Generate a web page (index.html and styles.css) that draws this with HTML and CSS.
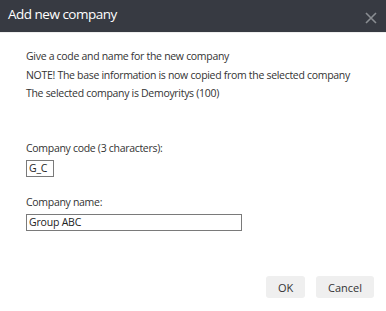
FILE: index.html
```html
<!DOCTYPE html>
<html lang="en">
<head>
    <meta charset="UTF-8">
    <title>Add new company</title>
    <link rel="stylesheet" href="styles.css">
</head>
<body>
    <div class="dialog">
        <div class="dialog-header">
            <span class="dialog-title">Add new company</span>
            <button type="button" class="btn-close" aria-label="Close">
                <svg width="12" height="12" viewBox="0 0 12 12">
                    <path d="M1 1 L11 11 M11 1 L1 11" stroke="#8a8d92" stroke-width="1.6" fill="none"/>
                </svg>
            </button>
        </div>
        <div class="dialog-body">
            <div class="info">
                <p>Give a code and name for the new company</p>
                <p>NOTE! The base information is now copied from the selected company</p>
                <p>The selected company is Demoyritys (100)</p>
            </div>
            <div class="form-group">
                <label for="code">Company code (3 characters):</label>
                <input type="text" id="code" class="input-code" value="G_C" maxlength="3">
            </div>
            <div class="form-group">
                <label for="name">Company name:</label>
                <input type="text" id="name" class="input-name" value="Group ABC">
            </div>
        </div>
        <div class="dialog-footer">
            <button type="button" class="btn btn-ok">OK</button>
            <button type="button" class="btn">Cancel</button>
        </div>
    </div>
</body>
</html>
```

FILE: styles.css
```css
:root {
    --header-bg: #373a42;
    --text-color: #333333;
    --border-color: #7a7a7a;
    --button-bg: #efefef;
}

* {
    margin: 0;
    padding: 0;
    box-sizing: border-box;
}

body {
    font-family: 'Open Sans', sans-serif;
    font-size: 10.5px;
    letter-spacing: -0.3px;
    color: var(--text-color);
    background: #ffffff;
}

.dialog {
    width: 386px;
    height: 311px;
    display: flex;
    flex-direction: column;
}

.dialog-header {
    height: 33px;
    background: var(--header-bg);
    border-bottom: 1px solid #eeeeee;
    display: flex;
    align-items: center;
    justify-content: space-between;
    padding: 0 9px 0 8px;
}

.dialog-title {
    color: #ffffff;
    font-size: 13.5px;
    letter-spacing: -0.5px;
    line-height: 1;
    margin-top: -2px;
}

.btn-close {
    background: none;
    border: none;
    display: flex;
    margin-top: 3px;
}

.dialog-body {
    flex: 1;
    padding: 14px 0 0 26px;
}

.info p {
    line-height: 18.5px;
    white-space: nowrap;
}

.form-group {
    display: flex;
    flex-direction: column;
    align-items: flex-start;
}

.info {
    margin-bottom: 36px;
}

.form-group + .form-group {
    margin-top: 16px;
}

label {
    line-height: 18px;
    margin-bottom: 3px;
}

input {
    font-family: inherit;
    font-size: 10.5px;
    letter-spacing: -0.2px;
    color: #222222;
    height: 17px;
    border: 1px solid var(--border-color);
    padding: 0 2px;
    outline: none;
}

.input-code {
    width: 28px;
}

.input-name {
    width: 216px;
}

.dialog-footer {
    display: flex;
    justify-content: flex-end;
    gap: 11px;
    padding: 0 12px 13px 0;
}

.btn {
    font-family: inherit;
    font-size: 11px;
    color: var(--text-color);
    background: var(--button-bg);
    border: none;
    border-radius: 3px;
    height: 22px;
    padding: 0 12px;
}

.btn-ok {
    width: 39px;
}
```
